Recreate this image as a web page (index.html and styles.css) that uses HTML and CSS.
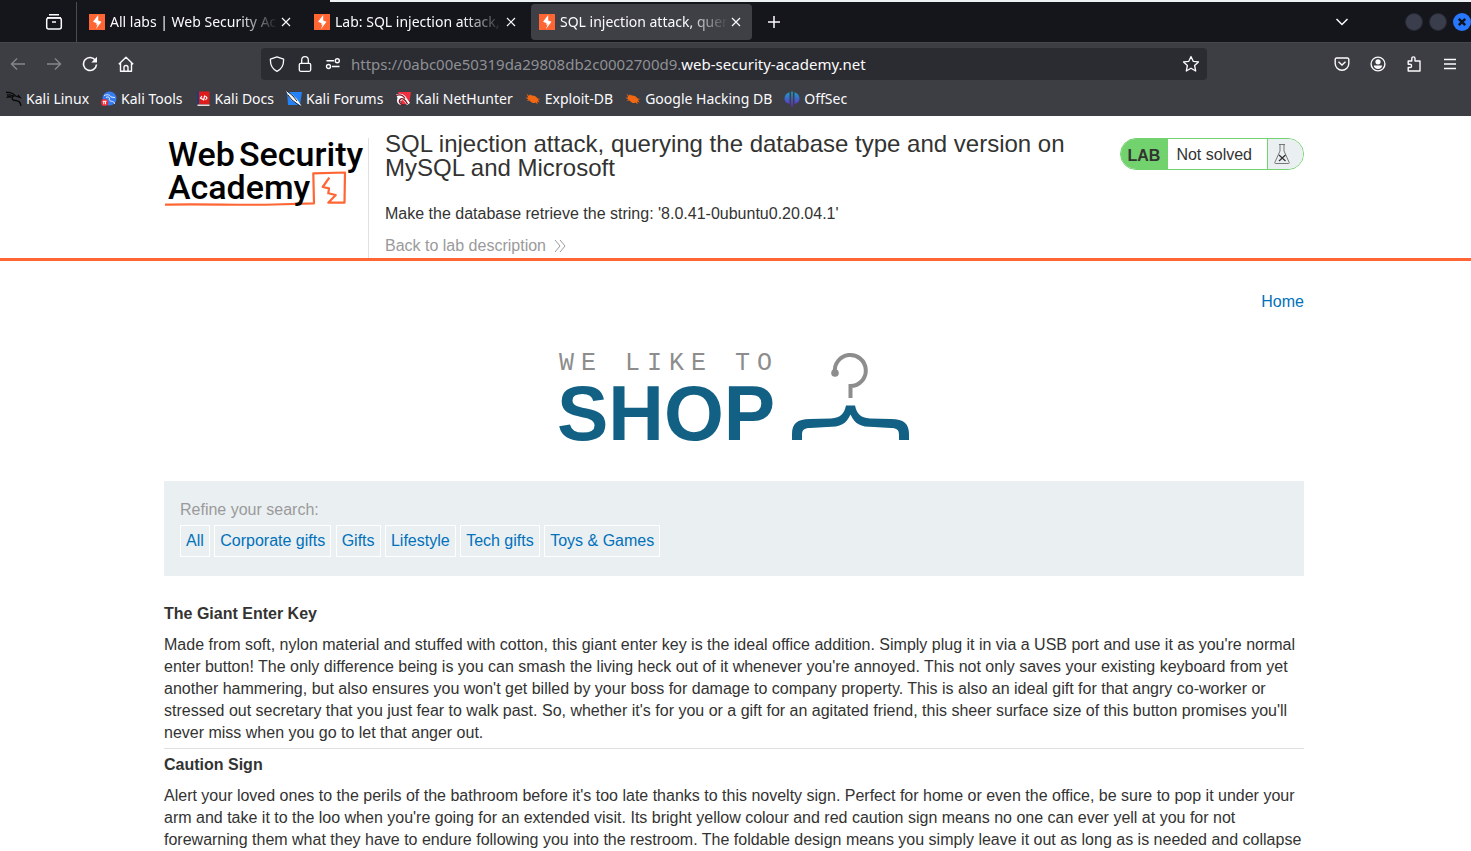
FILE: index.html
```html
<!DOCTYPE html>
<html lang="en">
<head>
<meta charset="utf-8">
<title>SQL injection attack, querying the database type and version on MySQL and Microsoft</title>
<link rel="stylesheet" href="styles.css">
</head>
<body>
<svg class="defs" width="0" height="0" aria-hidden="true">
  <defs>
    <symbol id="bolt" viewBox="0 0 16 16"><rect width="16" height="16" fill="#ff6633"/><path d="M9.200 1 4 7.800l3.600 1.400L7.200 11 8.600 10.300 7 15l5.500-7.200-3.300-1.300z" fill="#fff"/></symbol>
    <symbol id="x" viewBox="0 0 16 16"><path d="M4 4l8 8M12 4l-8 8" fill="none" stroke="currentColor" stroke-width="1.200"/></symbol>
    <symbol id="bug" viewBox="0 0 16 16"><path d="M1.500 2.500 4 5 4.500 3.500 7 4.500C9.500 4.500 11.500 5.500 12.500 7.500l3 .5-2.500.8 1.500 2.700-2.500-1 .8 3-2.300-2C8.500 13 6 11.500 4.500 9.500L1.500 10l2-1.500L.5 6.800l2.700-.3z" fill="#f26711"/></symbol>
  </defs>
</svg>

<div class="browser">
  <div class="desktop-strip"></div>
  <div class="tabbar">
    <div class="view-slot"><button class="icon-btn" aria-label="Firefox View"><svg width="18" height="18" viewBox="0 0 18 18" fill="none" stroke="currentColor" stroke-width="1.500"><path d="M4 1.700h10M2 4.700h14"/><rect x="1.700" y="5" width="14.600" height="11" rx="2"/><path d="M7 9h4"/></svg></button></div>
    <div class="tab"><svg class="fav"><use href="#bolt"/></svg><span class="tab-title">All labs | Web Security Academy</span><button class="icon-btn" aria-label="Close tab"><svg width="16" height="16"><use href="#x"/></svg></button></div>
    <div class="tab"><svg class="fav"><use href="#bolt"/></svg><span class="tab-title">Lab: SQL injection attack, querying</span><button class="icon-btn" aria-label="Close tab"><svg width="16" height="16"><use href="#x"/></svg></button></div>
    <div class="tab active"><svg class="fav"><use href="#bolt"/></svg><span class="tab-title">SQL injection attack, querying the</span><button class="icon-btn" aria-label="Close tab"><svg width="16" height="16"><use href="#x"/></svg></button></div>
    <button class="icon-btn new-tab" aria-label="New tab"><svg width="14" height="14" viewBox="0 0 14 14"><path d="M7 1v12M1 7h12" stroke="currentColor" stroke-width="1.500"/></svg></button>
    <button class="icon-btn list-tabs" aria-label="List all tabs"><svg width="14" height="14" viewBox="0 0 14 14"><path d="M1.500 4 7 9.500l5.500-5.500" fill="none" stroke="currentColor" stroke-width="1.500"/></svg></button>
    <div class="window-btns">
      <button class="dot" aria-label="Minimize"></button>
      <button class="dot" aria-label="Maximize"></button>
      <button class="dot close" aria-label="Close"><svg width="18" height="18" viewBox="0 0 18 18"><circle cx="9" cy="9" r="9" fill="#2777ff"/><path d="M5.800 5.800l6.400 6.400M12.200 5.800l-6.400 6.400" stroke="#10131c" stroke-width="2.500"/></svg></button>
    </div>
  </div>

  <div class="toolbar">
    <div class="nav">
      <button class="icon-btn dim" aria-label="Back"><svg width="16" height="16" viewBox="0 0 16 16" fill="none" stroke="currentColor" stroke-width="1.400"><path d="M15 8H1.500M7 2.500 1.500 8 7 13.500"/></svg></button>
      <button class="icon-btn dim" aria-label="Forward"><svg width="16" height="16" viewBox="0 0 16 16" fill="none" stroke="currentColor" stroke-width="1.400"><path d="M1 8h13.500M9 2.500 14.500 8 9 13.500"/></svg></button>
      <button class="icon-btn" aria-label="Reload"><svg width="16" height="16" viewBox="0 0 16 16" fill="none" stroke="currentColor" stroke-width="1.600"><path d="M13.500 4.500A6.500 6.500 0 1 0 14.500 8.500"/><path d="M15 .8V6.500H9.300z" fill="currentColor" stroke="none"/></svg></button>
      <button class="icon-btn" aria-label="Home"><svg width="16" height="16" viewBox="0 0 16 16" fill="none" stroke="currentColor" stroke-width="1.400" stroke-linejoin="round"><path d="M.8 8.300 8 1.200l7.200 7.100M2.500 7v8.200h11V7M6 15v-3.500a2 2 0 0 1 4 0V15"/></svg></button>
    </div>
    <div class="urlbar">
      <svg width="16" height="16" viewBox="0 0 16 16" fill="none" stroke="#fbfbfe" stroke-width="1.300" stroke-linejoin="round"><path d="M8 .9 14.600 3.200C14.800 8.500 12.800 13 8 15.300 3.200 13 1.200 8.500 1.400 3.200z"/></svg>
      <svg width="16" height="16" viewBox="0 0 16 16" fill="none" stroke="#fbfbfe" stroke-width="1.300"><rect x="2.300" y="7.300" width="11.400" height="8" rx="1.500"/><path d="M4.700 7V4a3.300 3.300 0 0 1 6.600 0v3"/></svg>
      <svg width="16" height="16" viewBox="0 0 16 16" fill="none" stroke="#fbfbfe" stroke-width="1.400"><path d="M1.500 4.800H9M7 10.500h7.500"/><circle cx="12.300" cy="4.800" r="2"/><circle cx="3.500" cy="10.500" r="2"/></svg>
      <div class="url">https://0abc00e50319da29808db2c0002700d9.<span class="host">web-security-academy.net</span></div>
      <button class="icon-btn" aria-label="Bookmark this page"><svg width="18" height="18" viewBox="0 0 18 18" fill="none" stroke="currentColor" stroke-width="1.300" stroke-linejoin="round"><path d="M9 1.500 11.200 6.300 16.500 6.900 12.600 10.500 13.700 16 9 13.200 4.300 16 5.400 10.500 1.500 6.900 6.800 6.300z"/></svg></button>
    </div>
    <div class="actions">
      <button class="icon-btn" aria-label="Save to Pocket"><svg width="16" height="16" viewBox="0 0 16 16" fill="none" stroke="currentColor" stroke-width="1.400"><path d="M2.500 2h11a1.300 1.300 0 0 1 1.300 1.300V7.500a6.800 6.800 0 0 1-13.600 0V3.300A1.300 1.300 0 0 1 2.500 2zM4.500 5.800 8 9l3.500-3.200"/></svg></button>
      <button class="icon-btn" aria-label="Account"><svg width="16" height="16" viewBox="0 0 16 16"><circle cx="8" cy="8" r="6.900" fill="none" stroke="currentColor" stroke-width="1.400"/><circle cx="8" cy="5.800" r="2.600" fill="currentColor"/><path d="M3.800 9.500h8.400C12 11.800 10.300 13 8 13S4 11.800 3.800 9.500z" fill="currentColor"/></svg></button>
      <button class="icon-btn" aria-label="Extensions"><svg width="16" height="16" viewBox="0 0 16 16" fill="none" stroke="currentColor" stroke-width="1.400" stroke-linejoin="round"><path d="M2.200 5h3.600V2.500a1.600 1.600 0 0 1 3.200 0V5h5v10H2.200v-3.500H4a1.600 1.600 0 0 0 0-3.200H2.200z"/></svg></button>
      <button class="icon-btn" aria-label="Open application menu"><svg width="16" height="16" viewBox="0 0 16 16" stroke="currentColor" stroke-width="1.300"><path d="M2 3.500h12M2 8h12M2 12.500h12"/></svg></button>
    </div>
  </div>

  <nav class="bookmarks">
    <a href="#"><svg viewBox="0 0 16 16" fill="none" stroke="#08080a"><path d="M0 1.500C4 1 7 2 9.500 5L14 6.500l-2-2.500M1 4c3-.5 5 0 6.500 1.200C5 7 6 9.500 9.500 9.500c3 0 5 2 5.500 5.500M.5 6.500c2-1 3-1 5-.5" stroke-width="1.300"/></svg>Kali Linux</a>
    <a href="#"><svg viewBox="0 0 16 16" fill="none"><circle cx="8.500" cy="7.500" r="7" fill="#367bf0"/><path d="M3 4.500c4-1.500 6-.5 7 1.500l4 .5M5 6.500C7 5.500 8 6 8.500 7c-1 3 1 3 3 3.500s2 1.500 2 2.500" stroke="#e7efff"/><circle cx="3.600" cy="11.500" r="3.600" fill="#ee2b36"/><path d="M1.700 10.300h3.800M2.800 10.300v3M4.500 10.300v3" stroke="#fff"/></svg>Kali Tools</a>
    <a href="#"><svg viewBox="0 0 16 16" fill="none"><path d="M2 .5h2v14H2z" fill="#183d80"/><path d="M4 .5h10.500v13H4z" fill="#df1c1c"/><path d="M2.500 13.500h12V15h-12z" fill="#e8dede"/><path d="M7 5 5.500 7 8 8.500M10.500 5 12 7l-1.500 2M9.700 4.500 8.500 9.500" stroke="#fff" stroke-width="1.200"/></svg>Kali Docs</a>
    <a href="#"><svg viewBox="0 0 16 16" fill="none"><path d="M1 1h15l-2 13H2z" fill="#2382f7"/><path d="M0 0 6 3.500 11 8l4.500 7L10 12 5 9z" fill="#f4f6f8"/><path d="M1 0 7 5l4 5M2 4l4 5 8 6" stroke="#22262c"/></svg>Kali Forums</a>
    <a href="#"><svg viewBox="0 0 16 16" fill="none"><path d="M3 1h13l-2 12H7z" fill="#f12f3e"/><path d="M1 3.500C6 1.500 10 3.500 11.500 7L15 12l-3 2-4-5-3 1 2 4C3 14 1 11 2.500 7z" fill="#fff"/><path d="M1 4.500c4-1.500 7-.5 9 3M12.500 13C10 8 7 6.500 5 8.500s0 4.500 4 6" stroke="#7d1322" stroke-width="1.300"/></svg>Kali NetHunter</a>
    <a href="#"><svg><use href="#bug"/></svg>Exploit-DB</a>
    <a href="#"><svg><use href="#bug"/></svg>Google Hacking DB</a>
    <a href="#"><svg viewBox="0 0 16 16"><defs><linearGradient id="offsec" x2="0" y2="1"><stop stop-color="#16a5c9"/><stop offset="1" stop-color="#6825c8"/></linearGradient></defs><path d="M5.500 1.200V13C2.500 12.500.5 10.500.5 7.500S2.500 2 5.500 1.200zM7.200.5h1.600v15H7.200zM10.500 1.200v11.800c3-.5 5-2.500 5-5.500s-2-5.500-5-6.300z" fill="url(#offsec)"/></svg>OffSec</a>
  </nav>
</div>

<div class="page">
  <header class="lab-header">
    <div class="container lab-row">
      <a class="logo" href="#" aria-label="Web Security Academy">
        <svg width="204" height="76" viewBox="0 0 204 76">
          <path d="M1 66.700C30 65.500 80 67.500 110 66.500L150 65.300 149.300 35.300 181 34.500 180.500 64.700H164.300L171.700 57 164.300 55.300 165 50.300 158.700 49 165.300 39.700" fill="none" stroke="#ff6633" stroke-width="2.200" stroke-linejoin="round"/>
          <text x="4" y="28" class="logo-text">Web</text><text x="75" y="28" class="logo-text">Security</text>
          <text x="4" y="61" class="logo-text">Academy</text>
        </svg>
      </a>
      <div class="lab-title">
        <h2>SQL injection attack, querying the database type and version on MySQL and Microsoft</h2>
        <p>Make the database retrieve the string: '8.0.41-0ubuntu0.20.04.1'</p>
        <a class="back" href="#">Back to lab description<svg width="12" height="12" viewBox="0 0 12 12"><path d="M1 0l5 6-5 6M6 0l5 6-5 6" fill="none" stroke="#9a9a9a"/></svg></a>
      </div>
      <div class="status"><span class="lab">LAB</span><span class="state">Not solved</span><span class="flask"><svg width="16" height="20" viewBox="0 0 16 20" fill="none"><path d="M5 .5h6M6 .5v6.500L.8 18.500c-.2.600 0 1 .7 1h13c.7 0 .9-.4.700-1L10 7V.500" stroke="#777"/><path d="M5 11l6.500 6M11.500 11 5 17" stroke="#333" stroke-width="1.300"/></svg></span></div>
    </div>
  </header>

  <main class="container">
    <nav class="top-links"><a href="#">Home</a></nav>
    <div class="shop-logo">
      <svg width="360" height="96" viewBox="0 0 360 96" role="img" aria-label="We like to shop">
        <text x="5" y="19" class="shop-small">WE LIKE TO</text>
        <text x="3" y="89" class="shop-big">SHOP</text>
        <path d="M281 22A15.500 15.500 0 1 1 296.500 35V47" fill="none" stroke="#8d8d8d" stroke-width="4"/>
        <circle cx="281" cy="22" r="3.800" fill="#8d8d8d"/>
        <path d="M292 54.500h9C303 63 306 66.500 316 67.500L337 68C350 68 355 73 355 83v6h-10v-5c0-5-2-7-8-7l-17-1c-14 0-19-3-23.500-12.500C292 73 287 76 273 76l-17 1c-6 0-8 2-8 7v5h-10v-6c0-10 5-15 18-15l21-.500C287 66.500 290 63 292 54.500z" fill="#126184"/>
      </svg>
    </div>
    <section class="filters">
      <p>Refine your search:</p>
      <div class="chips">
        <a href="#">All</a>
        <a href="#">Corporate gifts</a>
        <a href="#">Gifts</a>
        <a href="#">Lifestyle</a>
        <a href="#">Tech gifts</a>
        <a href="#">Toys &amp; Games</a>
      </div>
    </section>
    <section class="products">
      <article>
        <h3>The Giant Enter Key</h3>
        <p>Made from soft, nylon material and stuffed with cotton, this giant enter key is the ideal office addition. Simply plug it in via a USB port and use it as you're normal enter button! The only difference being is you can smash the living heck out of it whenever you're annoyed. This not only saves your existing keyboard from yet another hammering, but also ensures you won't get billed by your boss for damage to company property. This is also an ideal gift for that angry co-worker or stressed out secretary that you just fear to walk past. So, whether it's for you or a gift for an agitated friend, this sheer surface size of this button promises you'll never miss when you go to let that anger out.</p>
      </article>
      <article>
        <h3>Caution Sign</h3>
        <p>Alert your loved ones to the perils of the bathroom before it's too late thanks to this novelty sign. Perfect for home or even the office, be sure to pop it under your arm and take it to the loo when you're going for an extended visit. Its bright yellow colour and red caution sign means no one can ever yell at you for not forewarning them what they have to endure following you into the restroom. The foldable design means you simply leave it out as long as is needed and collapse</p>
      </article>
    </section>
  </main>
</div>
</body>
</html>
```
FILE: styles.css
```css
* { box-sizing: border-box; }
body { margin: 0; background: #fff; color: #333332; font: 16px/22px "Liberation Sans", Arial, sans-serif; }
h2, h3, p { margin: 0; }
a { color: #0071ba; text-decoration: none; }
.defs { display: block; }

.browser { background: linear-gradient(#15161c 43px, #3d3e43 43px); color: #fbfbfe; font: 14px/20px "Noto Sans", sans-serif; }
.icon-btn { display: flex; flex: none; align-items: center; justify-content: center; padding: 0; border: 0; background: none; color: inherit; }
.icon-btn svg { display: block; }
.desktop-strip { height: 2px; margin-left: 330px; background: #eef1f4; }
.tabbar { display: flex; align-items: center; height: 41px; padding-bottom: 1px; border-bottom: 1px solid #46474d; }
.view-slot { display: flex; justify-content: flex-end; width: 77px; height: 40px; padding-right: 13px; border-right: 1px solid #4b4c52; }
.tab { display: flex; align-items: center; flex: none; width: 221px; height: 36px; margin-left: 4px; padding: 0 8px; border-radius: 4px; }
.tab.active { background: #3f4046; }
.fav { width: 16px; height: 16px; flex: none; }
.tab-title { flex: 1; min-width: 0; margin-left: 5px; overflow: hidden; white-space: nowrap; -webkit-mask-image: linear-gradient(to left, transparent, #000 40px); mask-image: linear-gradient(to left, transparent, #000 40px); }
.new-tab { margin-left: 15px; }
.list-tabs { margin-left: auto; }
.window-btns { display: flex; gap: 6px; margin-left: 56px; }
.dot { width: 18px; height: 18px; padding: 0; border: 1px solid #272a35; border-radius: 50%; background: #3a3d4b; }
.dot.close { border: 0; background: none; }
.dot svg { display: block; }

.toolbar { display: flex; align-items: center; height: 42px; }
.nav { display: flex; gap: 20px; width: 261px; padding-left: 10px; }
.dim { color: #85868b; }
.urlbar { display: flex; flex: 1; align-items: center; gap: 12px; height: 32px; padding: 0 7px 0 8px; border-radius: 4px; background: #2b2c31; }
.url { flex: 1; margin-left: -2px; color: #8f9095; font-size: 15px; }
.host { color: #fbfbfe; }
.actions { display: flex; justify-content: flex-end; gap: 20px; width: 264px; padding-right: 13px; }

.bookmarks { display: flex; gap: 12px; height: 31px; padding: 4px 6px 7px; }
.bookmarks a { display: flex; align-items: center; gap: 4px; color: #fbfbfe; white-space: nowrap; }
.bookmarks svg { width: 16px; height: 16px; }

.page { padding-right: 3px; }
.container { max-width: 1140px; margin: 0 auto; }
.lab-header { margin-right: -3px; padding-right: 3px; border-bottom: 3px solid #ff6633; }
.lab-row { display: flex; align-items: flex-start; padding: 16px 0 0; }
.logo { flex: none; width: 205px; height: 120px; margin-top: 6px; border-right: 1px solid #e0e0e0; }
.logo svg { display: block; }
.logo-text { fill: #000; font: 500 34px Roboto, sans-serif; }
.lab-title { flex: 1; padding: 0 16px; }
.lab-title h2 { font-size: 24px; font-weight: 400; line-height: 24px; }
.lab-title p { margin-top: 23px; }
.back { display: inline-flex; align-items: center; gap: 8px; margin-top: 10px; color: #9a9a9a; }
.status { display: flex; flex: none; height: 32px; margin-top: 6px; overflow: hidden; border: 1px solid #72d26d; border-radius: 16px; line-height: 32px; }
.lab { padding: 0 8px 0 7px; background: #72d26d; font-weight: 700; line-height: 34px; }
.state { padding: 0 15px 0 8px; }
.flask { display: flex; align-items: center; width: 36px; padding-left: 6px; border-left: 1px solid #72d26d; background: #eaeff2; }

.top-links { display: flex; justify-content: flex-end; padding-top: 30px; }
.shop-logo { display: flex; justify-content: center; padding: 38px 0 34px; }
.shop-logo svg { display: block; }
.shop-small { fill: #8d8d8d; font: 25px "Liberation Mono", monospace; letter-spacing: 7px; }
.shop-big { fill: #126184; font: 700 77px "Liberation Sans", Arial, sans-serif; }
.filters { padding: 18px 16px 19px; background: #eaeff2; color: #9a9a9a; }
.chips { margin-top: 4px; }
.chips a { display: inline-block; padding: 4px 5px; border: 1px solid #fff; }
.products { padding-top: 27px; }
.products article { padding-bottom: 4px; }
.products article + article { padding: 5px 0 0; border-top: 1px solid #e0e0e0; }
.products h3 { font-size: 16px; line-height: 22px; }
.products p { margin-top: 9px; }
```
